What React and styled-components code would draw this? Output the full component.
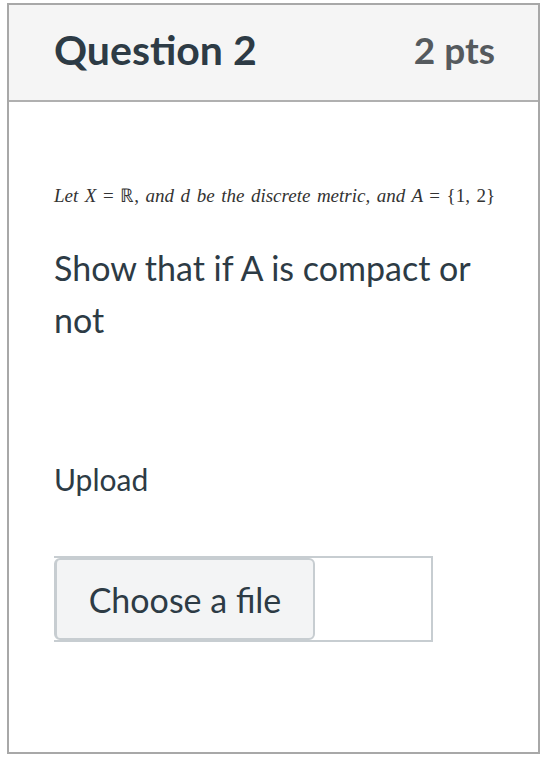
import React from "react";
import styled, { createGlobalStyle } from "styled-components";

const Global = createGlobalStyle`
  body {
    margin: 0;
    background: #ffffff;
    font-family: Lato, "Liberation Sans", sans-serif;
  }
`;

const Card = styled.div`
  margin: 3px 8px 0 7px;
  height: 751px;
  box-sizing: border-box;
  border: 2px solid #a8a8a8;
  display: flex;
  flex-direction: column;
`;

const Header = styled.div`
  height: 97px;
  box-sizing: border-box;
  background: #f5f5f5;
  border-bottom: 2px solid #b0b0b0;
  display: flex;
  align-items: center;
  justify-content: space-between;
  padding: 0 43px 6px 45px;
`;

const Title = styled.h2`
  margin: 0;
  font-size: 41px;
  font-weight: 700;
  color: #2d3b45;
`;

const Points = styled.span`
  font-size: 37px;
  font-weight: 700;
  color: #555a5e;
`;

const Body = styled.div`
  padding: 80px 40px 0 45px;
  color: #2d3b45;
`;

const MathLine = styled.p`
  margin: 0;
  font-family: "Liberation Serif", serif;
  font-style: italic;
  font-size: 19px;
  color: #333;
  white-space: nowrap;
  word-spacing: 1.8px;
`;

const Upright = styled.span`
  font-style: normal;
`;

const Prompt = styled.p`
  margin: 34px 0 0;
  font-size: 34px;
  line-height: 52px;
`;

const Label = styled.p`
  margin: 115px 0 0;
  font-size: 30px;
`;

const FileField = styled.label`
  margin-top: 59px;
  width: 379px;
  height: 86px;
  box-sizing: border-box;
  border: 2px solid #c7cdd1;
  border-left: none;
  display: flex;
`;

const FileButton = styled.span`
  width: 261px;
  box-sizing: border-box;
  background: #f3f4f5;
  border: 2px solid #c7cdd1;
  border-left-width: 3px;
  border-radius: 6px;
  display: flex;
  align-items: center;
  justify-content: center;
  font-size: 34px;
  color: #2d3b45;
`;

export default function App() {
  return (
    <>
      <Global />
      <Card>
        <Header>
          <Title>Question 2</Title>
          <Points>2 pts</Points>
        </Header>
        <Body>
          <MathLine>
            Let X <Upright>= ℝ,</Upright> and d be the discrete metric,{" "}
            and A <Upright>= {"{1, 2}"}</Upright>
          </MathLine>
          <Prompt>
            Show that if A is compact or
            <br />
            not
          </Prompt>
          <Label>Upload</Label>
          <FileField>
            <FileButton>Choose a file</FileButton>
          </FileField>
        </Body>
      </Card>
    </>
  );
}
